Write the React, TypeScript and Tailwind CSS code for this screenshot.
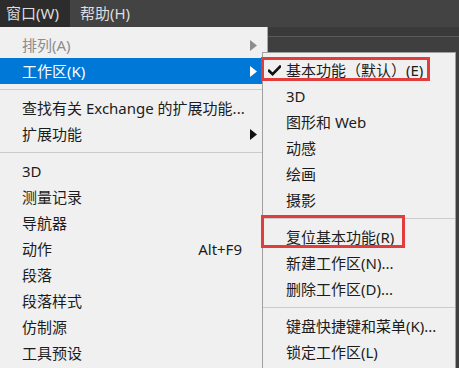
import React from "react";

const font = { fontFamily: '"Noto Sans", "Noto Sans CJK SC", sans-serif' };

function Arrow({ color }: { color: string }) {
  return (
    <svg width="7" height="11" viewBox="0 0 7 11" className="absolute right-[10px] top-[8px]">
      <polygon points="0,0 7,5.5 0,11" fill={color} />
    </svg>
  );
}

function Row({
  label,
  disabled,
  active,
  arrow,
  shortcut,
}: {
  label: string;
  disabled?: boolean;
  active?: boolean;
  arrow?: boolean;
  shortcut?: string;
}) {
  const color = active ? "text-white" : disabled ? "text-[#8d8d8d]" : "text-[#1c1c1c]";
  const bg = active ? "bg-[#0078d7]" : "";
  return (
    <div className={`relative h-[26px] flex items-center justify-between whitespace-nowrap pl-[22px] pr-[25px] ${bg} ${color}`}>
      <span>{label}</span>
      {shortcut && <span>{shortcut}</span>}
      {arrow && <Arrow color={active ? "#ffffff" : disabled ? "#8d8d8d" : "#111111"} />}
    </div>
  );
}

function Sep() {
  return (
    <div className="h-[11px] flex items-center">
      <div className="h-px w-full bg-[#cbcbcb]" />
    </div>
  );
}

function SubRow({ label, checked }: { label: string; checked?: boolean }) {
  return (
    <div className="h-[26px] flex items-center whitespace-nowrap text-[#1c1c1c]">
      <div className="w-[23px] flex items-center justify-center">
        {checked && (
          <svg width="13" height="11" viewBox="0 0 13 11">
            <path d="M1 5.8 L4.6 9.2 L12 1.6" stroke="#111" strokeWidth="2.6" fill="none" strokeLinecap="square" />
          </svg>
        )}
      </div>
      <span>{label}</span>
    </div>
  );
}

export default function App() {
  return (
    <div className="relative w-[459px] h-[368px] overflow-hidden bg-[#3c3c3c] text-[15px] leading-none" style={font}>
      <div className="h-[27px] bg-[#434343] flex text-[#dedede]">
        <div className="w-[70px] bg-[#2c2c2c] flex items-center pl-[6px] whitespace-nowrap">窗口(W)</div>
        <div className="flex items-center pl-[10px] whitespace-nowrap">帮助(H)</div>
      </div>
      <div className="flex h-[341px]">
        <div className="w-[268px] h-full bg-[#f0f0f0] border-r border-[#a9a9a9] pt-[5px]">
          <Row label="排列(A)" disabled arrow />
          <Row label="工作区(K)" active arrow />
          <Sep />
          <Row label="查找有关 Exchange 的扩展功能..." />
          <Row label="扩展功能" arrow />
          <Sep />
          <Row label="3D" />
          <Row label="测量记录" />
          <Row label="导航器" />
          <Row label="动作" shortcut="Alt+F9" />
          <Row label="段落" />
          <Row label="段落样式" />
          <Row label="仿制源" />
          <Row label="工具预设" />
        </div>
        <div className="flex-1 flex flex-col">
          <div className="h-[9px] bg-[#3a3a3a]" />
          <div className="h-px bg-[#5a5a5a]" />
          <div className="flex-1 bg-[#3f3f3f]" />
        </div>
      </div>

      <div className="absolute left-[262px] top-[52px] w-[194px] h-[330px] bg-[#f0f0f0] border border-[#a0a0a0] pt-[4px]">
        <SubRow label="基本功能（默认）(E)" checked />
        <SubRow label="3D" />
        <SubRow label="图形和 Web" />
        <SubRow label="动感" />
        <SubRow label="绘画" />
        <SubRow label="摄影" />
        <Sep />
        <SubRow label="复位基本功能(R)" />
        <SubRow label="新建工作区(N)..." />
        <SubRow label="删除工作区(D)..." />
        <Sep />
        <SubRow label="键盘快捷键和菜单(K)..." />
        <SubRow label="锁定工作区(L)" />
      </div>

      <div className="absolute left-[261px] top-[57px] w-[169px] h-[24px] border-[3px] border-[#e23c3c]" />
      <div className="absolute left-[261px] top-[215px] w-[144px] h-[33px] border-[3px] border-[#e23c3c]" />
    </div>
  );
}
